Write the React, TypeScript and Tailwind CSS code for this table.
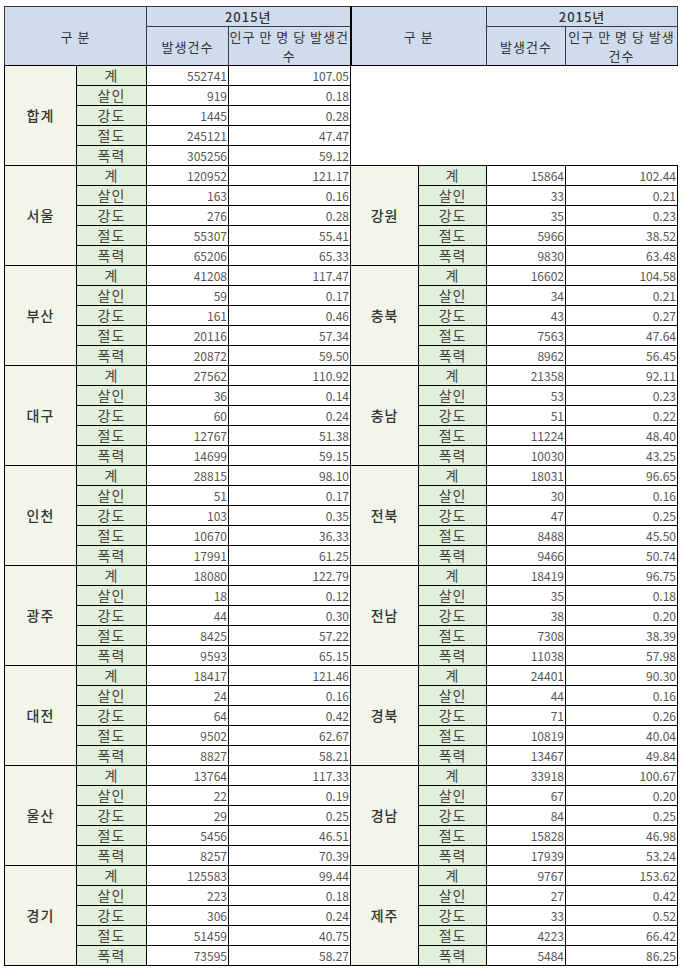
import React from "react";

type Row = [number, string];
interface Group {
  name: string;
  rows: Row[];
}

const cats = ["계", "살인", "강도", "절도", "폭력"];

const left: Group[] = [
  { name: "합계", rows: [[552741, "107.05"], [919, "0.18"], [1445, "0.28"], [245121, "47.47"], [305256, "59.12"]] },
  { name: "서울", rows: [[120952, "121.17"], [163, "0.16"], [276, "0.28"], [55307, "55.41"], [65206, "65.33"]] },
  { name: "부산", rows: [[41208, "117.47"], [59, "0.17"], [161, "0.46"], [20116, "57.34"], [20872, "59.50"]] },
  { name: "대구", rows: [[27562, "110.92"], [36, "0.14"], [60, "0.24"], [12767, "51.38"], [14699, "59.15"]] },
  { name: "인천", rows: [[28815, "98.10"], [51, "0.17"], [103, "0.35"], [10670, "36.33"], [17991, "61.25"]] },
  { name: "광주", rows: [[18080, "122.79"], [18, "0.12"], [44, "0.30"], [8425, "57.22"], [9593, "65.15"]] },
  { name: "대전", rows: [[18417, "121.46"], [24, "0.16"], [64, "0.42"], [9502, "62.67"], [8827, "58.21"]] },
  { name: "울산", rows: [[13764, "117.33"], [22, "0.19"], [29, "0.25"], [5456, "46.51"], [8257, "70.39"]] },
  { name: "경기", rows: [[125583, "99.44"], [223, "0.18"], [306, "0.24"], [51459, "40.75"], [73595, "58.27"]] },
];

const right: Group[] = [
  { name: "강원", rows: [[15864, "102.44"], [33, "0.21"], [35, "0.23"], [5966, "38.52"], [9830, "63.48"]] },
  { name: "충북", rows: [[16602, "104.58"], [34, "0.21"], [43, "0.27"], [7563, "47.64"], [8962, "56.45"]] },
  { name: "충남", rows: [[21358, "92.11"], [53, "0.23"], [51, "0.22"], [11224, "48.40"], [10030, "43.25"]] },
  { name: "전북", rows: [[18031, "96.65"], [30, "0.16"], [47, "0.25"], [8488, "45.50"], [9466, "50.74"]] },
  { name: "전남", rows: [[18419, "96.75"], [35, "0.18"], [38, "0.20"], [7308, "38.39"], [11038, "57.98"]] },
  { name: "경북", rows: [[24401, "90.30"], [44, "0.16"], [71, "0.26"], [10819, "40.04"], [13467, "49.84"]] },
  { name: "경남", rows: [[33918, "100.67"], [67, "0.20"], [84, "0.25"], [15828, "46.98"], [17939, "53.24"]] },
  { name: "제주", rows: [[9767, "153.62"], [27, "0.42"], [33, "0.52"], [4223, "66.42"], [5484, "86.25"]] },
];

const th = "border border-[#3a3a3a] bg-[#cfdcee] text-[13px] tracking-[1px] text-[#333] p-0 leading-[19px] whitespace-nowrap";
const region = "border border-black bg-[#f2f5e9] text-[14px] tracking-[1px] font-medium text-[#333] text-center p-0";
const cat = "border border-black bg-[#e2efda] text-[14px] tracking-[1px] text-[#444] text-center p-0 leading-[19px]";
const num = "border border-black text-[12px] text-[#555] text-right pr-[1px] p-0 leading-[19px]";

function Cells({ g, i }: { g: Group; i: number }) {
  const [count, rate] = g.rows[i];
  return (
    <>
      {i === 0 && (
        <td rowSpan={5} className={region}>
          {g.name}
        </td>
      )}
      <td className={cat}>{cats[i]}</td>
      <td className={num}>{count}</td>
      <td className={num}>{rate}</td>
    </>
  );
}

export default function App() {
  const body: React.ReactNode[] = [];
  for (let r = 0; r < 45; r++) {
    const gi = Math.floor(r / 5);
    const i = r % 5;
    const rg = gi > 0 ? right[gi - 1] : null;
    body.push(
      <tr key={r} className="h-[20px]">
        <Cells g={left[gi]} i={i} />
        {rg ? (
          <Cells g={rg} i={i} />
        ) : (
          r === 0 && <td colSpan={4} rowSpan={5} className="p-0 border-0" />
        )}
      </tr>,
    );
  }

  return (
    <div
      className="min-h-[968px] bg-white pt-[6px] pl-[4px]"
      style={{ fontFamily: '"Noto Sans CJK KR", "Noto Sans", sans-serif' }}
    >
      <table className="border-collapse table-fixed w-[673px]">
        <colgroup>
          <col className="w-[72px]" />
          <col className="w-[70px]" />
          <col className="w-[82px]" />
          <col className="w-[122px]" />
          <col className="w-[68px]" />
          <col className="w-[68px]" />
          <col className="w-[79px]" />
          <col className="w-[112px]" />
        </colgroup>
        <thead>
          <tr className="h-[20px]">
            <th rowSpan={2} colSpan={2} className={`${th} font-normal border-b-black`}>
              구 분
            </th>
            <th colSpan={2} className={`${th} font-medium`}>
              2015년
            </th>
            <th rowSpan={2} colSpan={2} className={`${th} font-normal border-b-black border-l-2 border-l-black`}>
              구 분
            </th>
            <th colSpan={2} className={`${th} font-medium`}>
              2015년
            </th>
          </tr>
          <tr className="h-[39px]">
            <th className={`${th} font-normal border-b-black`}>발생건수</th>
            <th className={`${th} font-normal border-b-black`}>
              인구 만 명 당 발생건
              <br />수
            </th>
            <th className={`${th} font-normal border-b-black`}>발생건수</th>
            <th className={`${th} font-normal border-b-black`}>
              인구 만 명 당 발생
              <br />건수
            </th>
          </tr>
        </thead>
        <tbody>{body}</tbody>
      </table>
    </div>
  );
}
